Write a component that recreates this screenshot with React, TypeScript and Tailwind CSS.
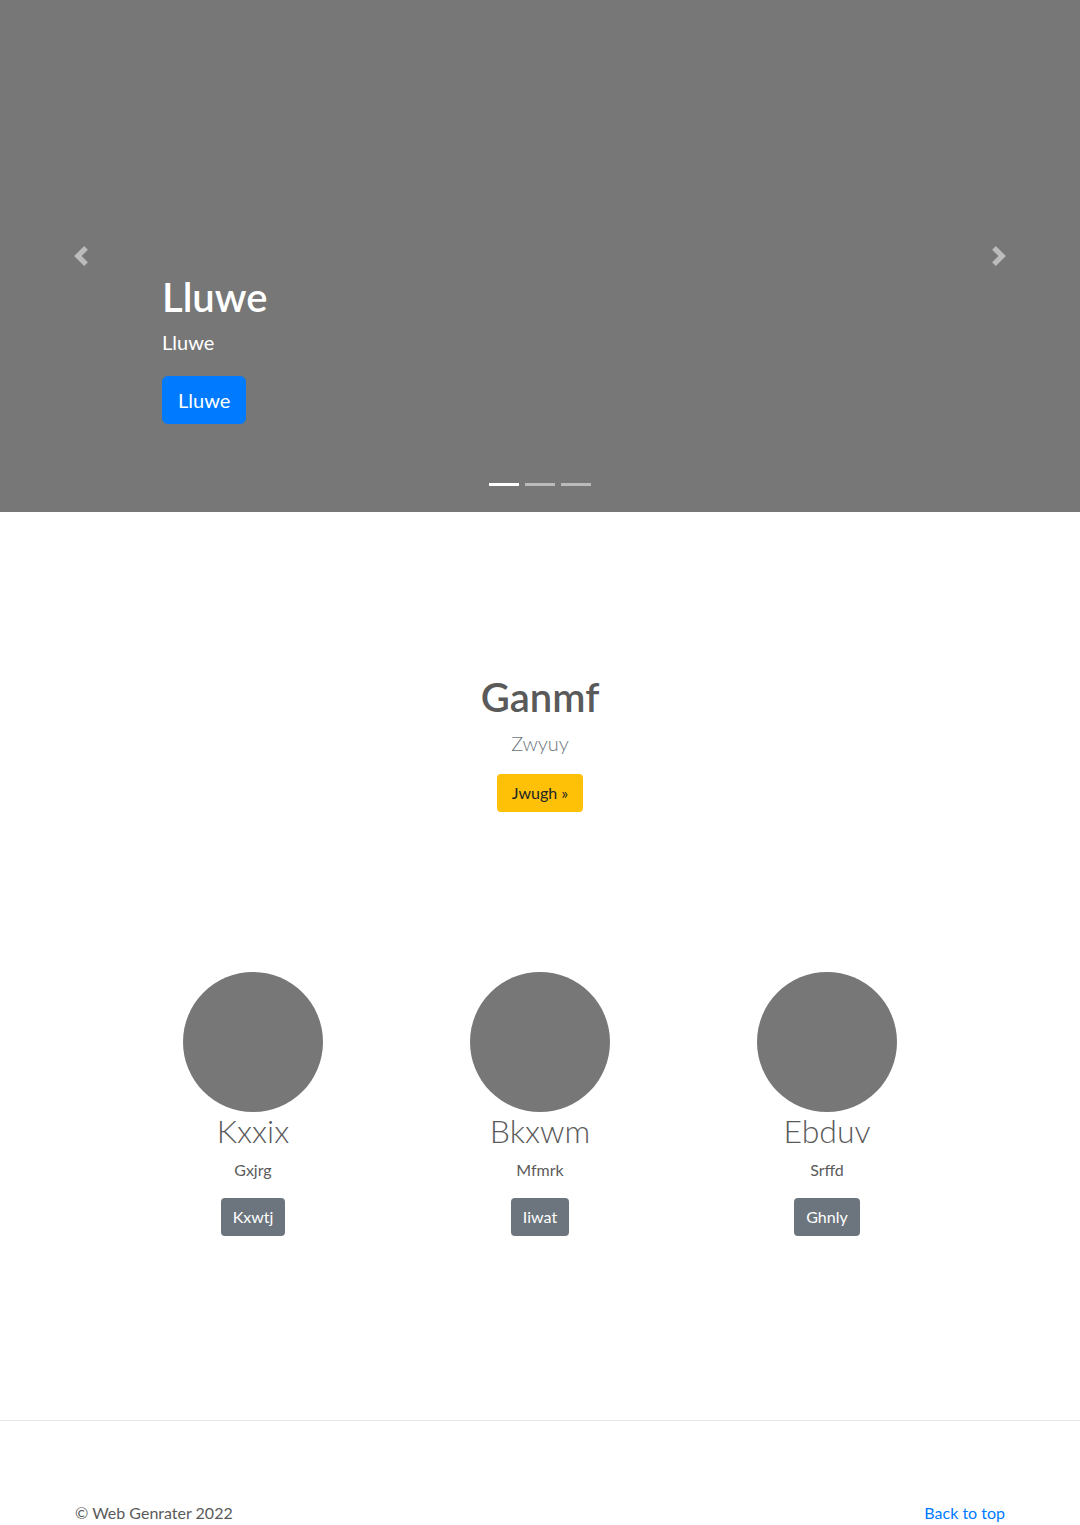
import React from "react";

const Chevron = ({ dir }: { dir: "prev" | "next" }) => (
  <svg width="20" height="20" viewBox="0 0 8 8" fill="#fff">
    {dir === "prev" ? (
      <path d="M5.25 0l-4 4 4 4 1.5-1.5L4.25 4l2.5-2.5L5.25 0z" />
    ) : (
      <path d="M2.75 0l-1.5 1.5L3.75 4l-2.5 2.5L2.75 8l4-4-4-4z" />
    )}
  </svg>
);

const cols = [
  { h: "Kxxix", p: "Gxjrg", b: "Kxwtj" },
  { h: "Bkxwm", p: "Mfmrk", b: "Iiwat" },
  { h: "Ebduv", p: "Srffd", b: "Ghnly" },
];

export default function App() {
  return (
    <div className="min-h-[1525px] bg-white text-[#5a5a5a] font-['Lato','Open_Sans',sans-serif]">
      {/* Carousel */}
      <section className="relative h-[512px] bg-[#777777]">
        <div className="pl-[15%] pt-[273px] text-white">
          <h1 className="text-[40px] leading-[48px] font-semibold mb-[6px]">Lluwe</h1>
          <p className="text-[20px] leading-[30px] mb-[19px]">Lluwe</p>
          <button className="h-[48px] px-4 rounded-[6px] bg-[#007bff] text-white text-[20px] leading-[30px]">
            Lluwe
          </button>
        </div>
        <div className="absolute left-[71px] top-[246px] opacity-50">
          <Chevron dir="prev" />
        </div>
        <div className="absolute right-[71px] top-[246px] opacity-50">
          <Chevron dir="next" />
        </div>
        <div className="absolute left-0 right-0 bottom-[26px] flex justify-center gap-[6px]">
          <span className="w-[30px] h-[3px] bg-white" />
          <span className="w-[30px] h-[3px] bg-white opacity-50" />
          <span className="w-[30px] h-[3px] bg-white opacity-50" />
        </div>
      </section>

      {/* Intro */}
      <section className="pt-[161px] flex flex-col items-center text-center">
        <h1 className="text-[40px] leading-[48px] font-semibold mb-[7px]">Ganmf</h1>
        <p className="text-[20px] leading-[30px] font-light text-[#6c757d] mb-4">Zwyuy</p>
        <button className="h-[38px] px-[15px] rounded-[4px] bg-[#ffc107] text-[#212529] text-[16px]">
          Jwugh »
        </button>
      </section>

      {/* Columns */}
      <section className="mt-[160px] w-[861px] mx-auto grid grid-cols-3">
        {cols.map((c) => (
          <div key={c.h} className="flex flex-col items-center text-center">
            <div className="w-[140px] h-[140px] rounded-full bg-[#777777]" />
            <h2 className="text-[32px] leading-[38px] font-light mb-2">{c.h}</h2>
            <p className="text-[16px] leading-[24px] mb-4">{c.p}</p>
            <button className="h-[38px] px-3 rounded-[4px] bg-[#6c757d] text-white text-[16px]">
              {c.b}
            </button>
          </div>
        ))}
      </section>

      <hr className="mt-[184px] border-0 border-t border-[#e6e6e6]" />

      <footer className="w-[960px] mx-auto px-[15px] pt-[80px] flex justify-between text-[16px] leading-[24px]">
        <p>© Web Genrater 2022</p>
        <a href="#" className="text-[#007bff]">
          Back to top
        </a>
      </footer>
    </div>
  );
}
